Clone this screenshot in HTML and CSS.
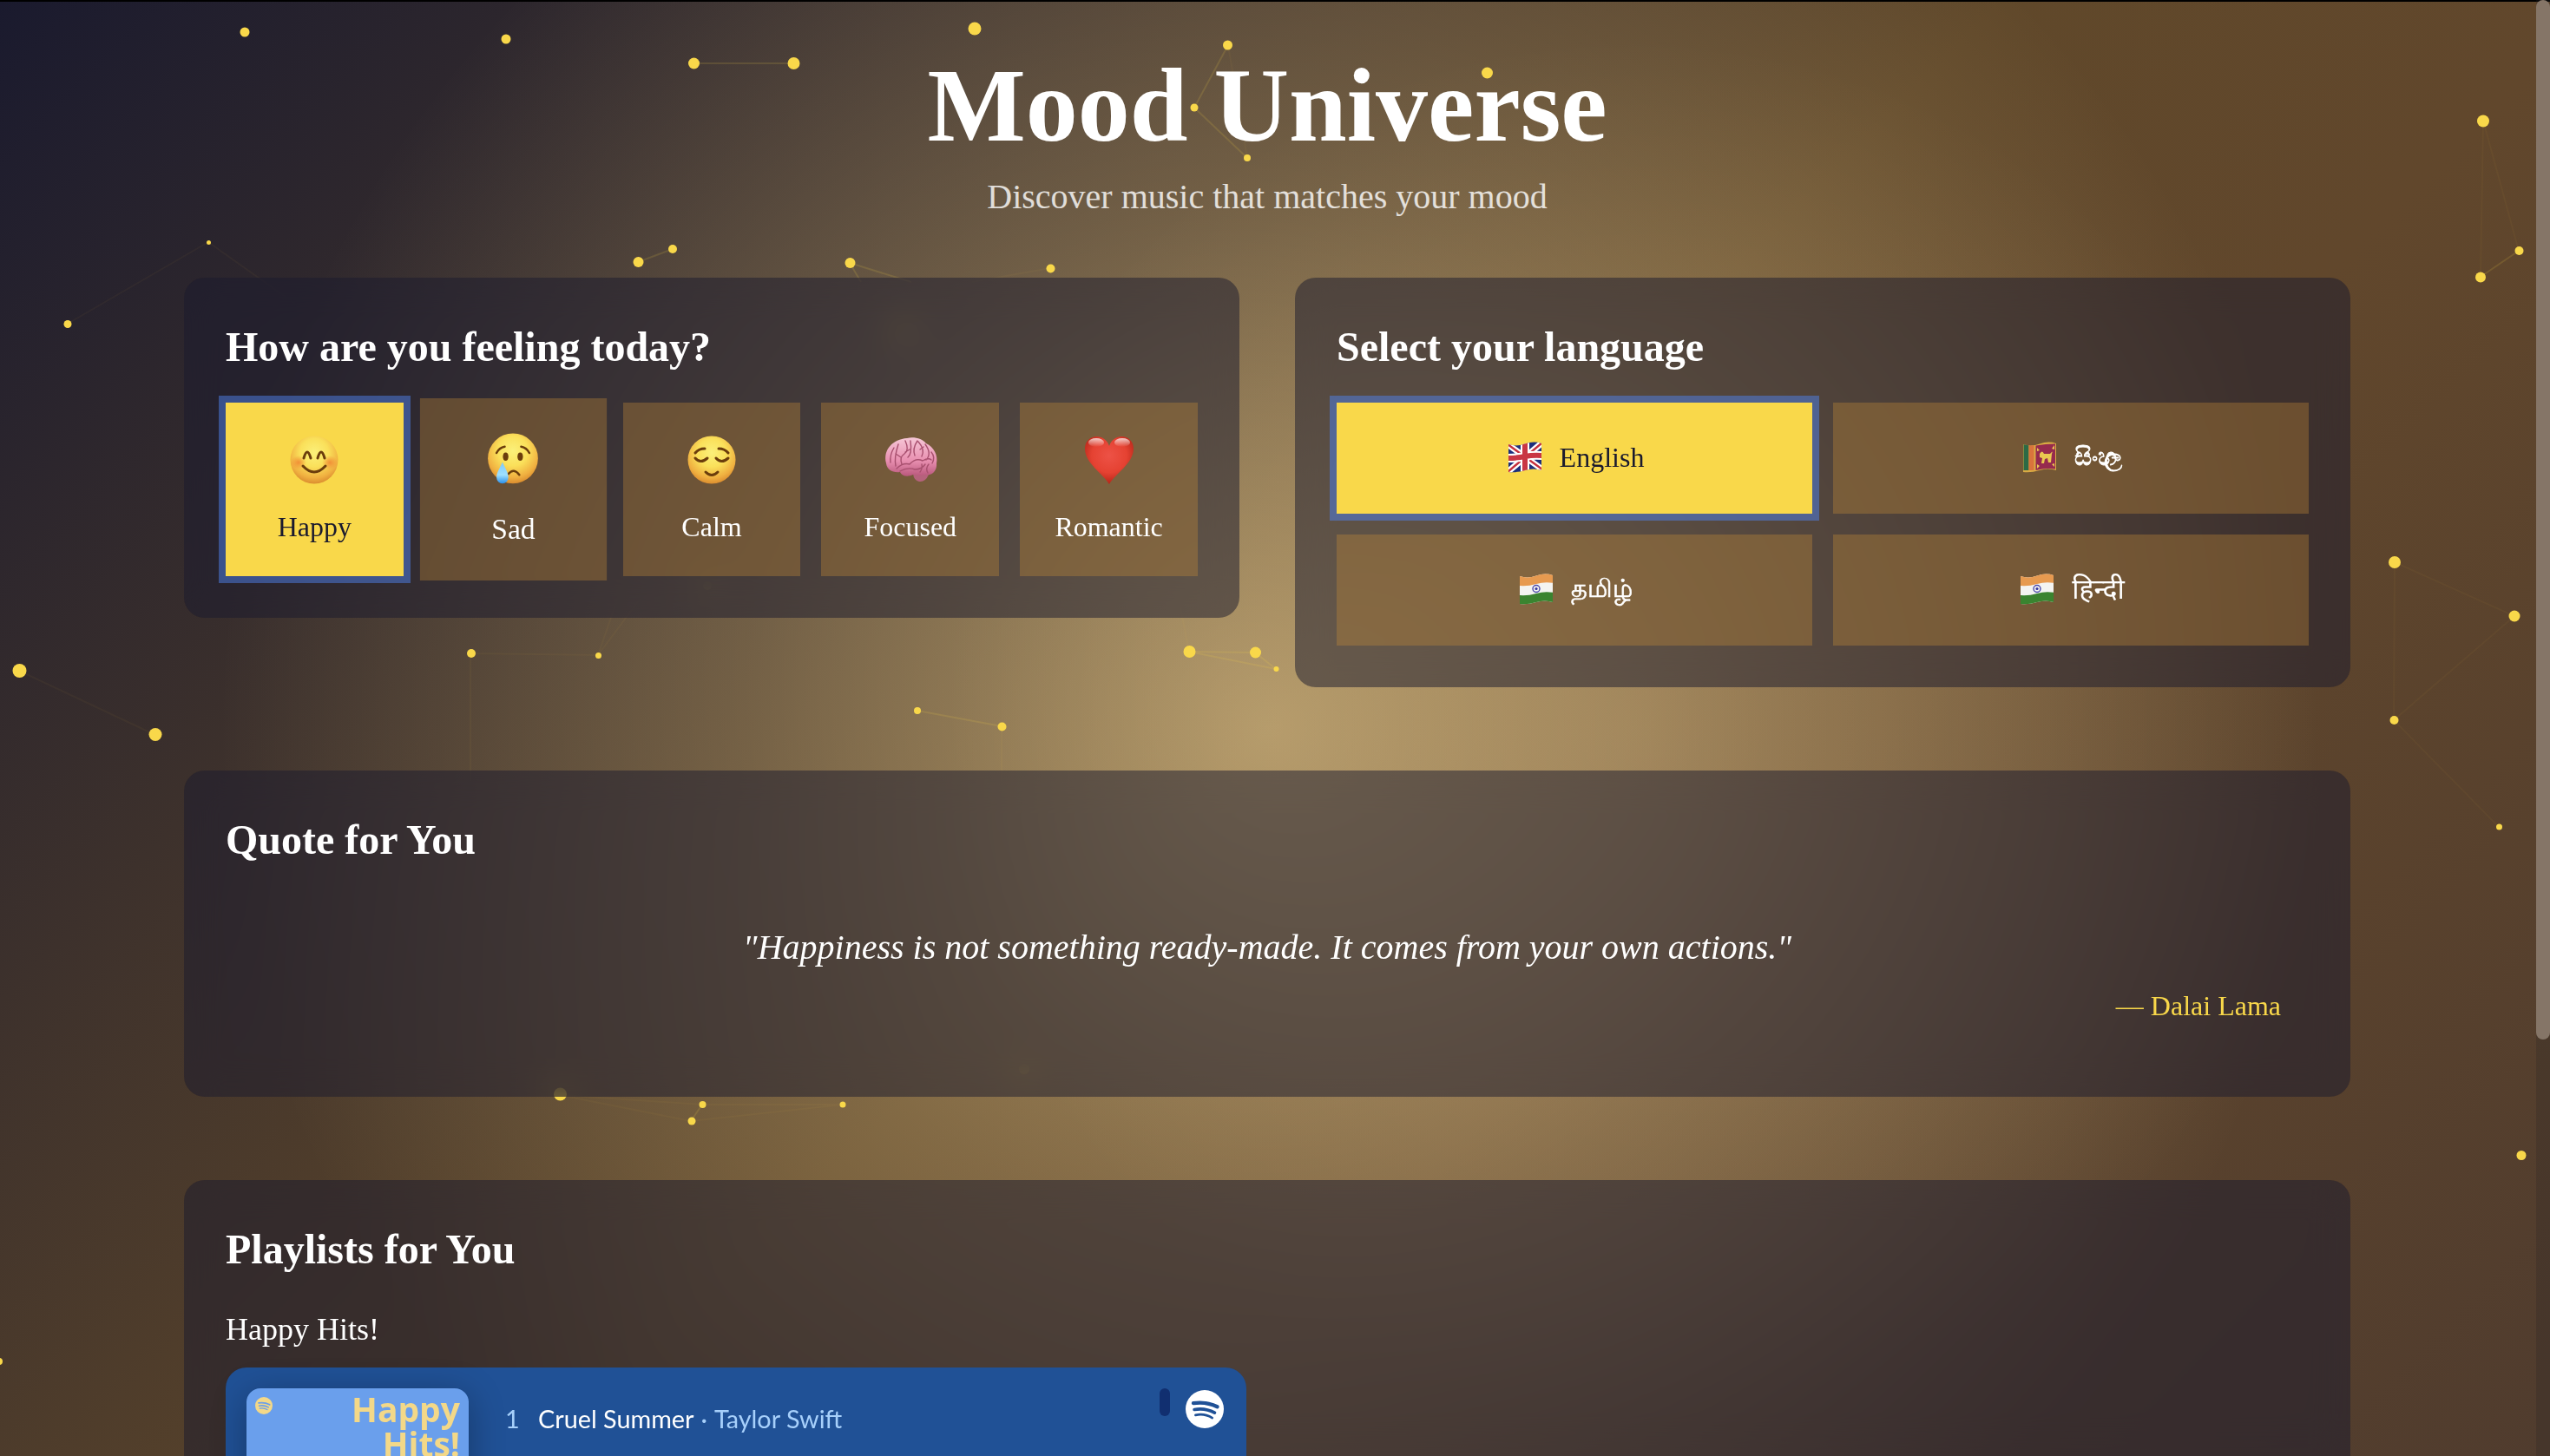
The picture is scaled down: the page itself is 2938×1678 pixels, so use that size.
FILE: index.html
```html
<!DOCTYPE html>
<html lang="en">
<head>
<meta charset="utf-8">
<title>Mood Universe</title>
<link rel="stylesheet" href="styles.css">
</head>
<body>
<svg class="stars" viewBox="0 0 2922 1678" width="2922" height="1678" aria-hidden="true">
  <g class="links">
    <path class="strong" d="M799 73H914M1415 52L1376 124L1437 182M735 302L775 287M2858 319L2902 289M1370 751L1446 752L1470 771L1370 751M809 1273L796 1292M979 303L1050 325M979 303L992 325M1057 819L1154 837"/>
    <path d="M1415 52L1437 182M1210 309L1120 325M240 279L78 373M240 279L340 350M542 753L689 755L745 680M689 755L715 680M542 753V900M22 773L179 847M1154 837V900M2861 139L2902 289M2861 139L2858 319M2759 648L2897 710L2758 830ZM2758 830L2879 953M645 1262L796 1292L971 1273L809 1273L645 1262M1370 751L1360 700"/>
  </g>
  <g class="dots">
    <circle cx="282" cy="37" r="5.5"/><circle cx="583" cy="45" r="5.5"/><circle cx="799.500" cy="73" r="6.500"/><circle cx="914.500" cy="73" r="7"/>
    <circle cx="1123" cy="33" r="7.500"/><circle cx="1414.500" cy="52" r="5.500"/><circle cx="1376" cy="124" r="4.500"/><circle cx="1437" cy="182" r="4"/>
    <circle cx="240.500" cy="279.500" r="2.500"/><circle cx="78" cy="373.500" r="4.500"/><circle cx="735.500" cy="302" r="6"/><circle cx="775" cy="287" r="5"/>
    <circle cx="979.500" cy="303" r="6"/><circle cx="1210.500" cy="309.500" r="5"/><circle cx="543" cy="753" r="5"/><circle cx="689.500" cy="755.500" r="3.500"/>
    <circle cx="22.500" cy="773" r="8"/><circle cx="1370.500" cy="751" r="7"/><circle cx="1446.500" cy="752" r="6.500"/><circle cx="1470.500" cy="771" r="3"/>
    <circle cx="1057" cy="819" r="4"/><circle cx="1154.500" cy="837.500" r="5"/><circle cx="179" cy="846.500" r="7.500"/><circle cx="645.500" cy="1261" r="7.500"/>
    <circle cx="809.500" cy="1273" r="4"/><circle cx="797" cy="1292" r="4.500"/><circle cx="971" cy="1273" r="3.500"/><circle cx="-1" cy="1569" r="4"/>
    <circle cx="1713.500" cy="84" r="6.500"/><circle cx="2861" cy="139.500" r="7"/><circle cx="2902.500" cy="289" r="5"/><circle cx="2858" cy="319.500" r="6"/>
    <circle cx="2759" cy="648" r="7"/><circle cx="2897" cy="710" r="6.500"/><circle cx="2758.500" cy="830" r="5"/><circle cx="2879.500" cy="953" r="3.500"/>
    <circle cx="2905" cy="1331.500" r="5.500"/><circle cx="1040" cy="380" r="7"/><circle cx="815" cy="675" r="5"/><circle cx="1180" cy="1232" r="6"/>
  </g>
</svg>

<main class="page">
  <header class="header">
    <h1 class="title">Mood Universe</h1>
    <p class="subtitle">Discover music that matches your mood</p>
  </header>

  <div class="selectors">
    <section class="card">
      <h2 class="heading">How are you feeling today?</h2>
      <div class="moods">
        <button class="mood active">
          <svg class="emoji" viewBox="0 0 64 64"><circle cx="32" cy="32" r="27.500" fill="url(#face)"/><ellipse cx="14" cy="35" rx="9" ry="8" fill="url(#blush)"/><ellipse cx="50" cy="35" rx="9" ry="8" fill="url(#blush)"/><path d="M20 30q4-14 8 0M36 30q4-14 8 0M19 39q13 14 26 0" class="ink"/></svg>
          <span>Happy</span>
        </button>
        <button class="mood hovered">
          <svg class="emoji" viewBox="0 0 64 64"><circle cx="32" cy="32" r="27.500" fill="url(#face)"/><path d="M14 26q3-6 9-7M50 26q-3-6-9-7M27 49q6-7 12 1" class="ink thin"/><ellipse cx="24" cy="30" rx="3" ry="4.500" fill="#6b3d0c"/><ellipse cx="40" cy="30" rx="3" ry="4.500" fill="#6b3d0c"/><path d="M20.500 36C17 44 14 48 14 53a6.500 6.500 0 0 0 13 0c0-5-3-9-6.500-17z" fill="url(#tear)"/></svg>
          <span>Sad</span>
        </button>
        <button class="mood">
          <svg class="emoji" viewBox="0 0 64 64"><circle cx="32" cy="32" r="27.500" fill="url(#face)"/><path d="M13 24q4-5 11-5M51 24q-4-5-11-5M13 30q6 7 14 0M37 30q6 7 14 0M25 46q7 7 14 0" class="ink"/></svg>
          <span>Calm</span>
        </button>
        <button class="mood">
          <svg class="emoji" viewBox="0 0 64 64"><path d="M35 48q10-5 18 1-4 9-11 8-6-1-7-9z" fill="#b5627c"/><path d="M4 36C0 20 12 8 28 7c9-2 18 1 22 6 9 4 14 14 12 23 1 8-5 15-13 13-6 2-10 0-14 0-6 3-13 2-15-3C12 47 5 44 4 36z" fill="url(#brain)"/><path d="M9 35q-1-9 4-17M15 39q-2-10 3-25M22 37q-3-8 3-12t1-15M29 29q5-4 3-19M37 27q-3-8 3-17M45 28q4-8-4-17M50 32q7-7-1-18M57 36q4-7-1-13M16 42q7-7 15-5 7-8 15-4 7-4 10-1M20 45q9-5 17-2 8 0 12-6M43 46q3-4 2-9M52 47q-3-5 1-10M15 25l6 4M31 20l-5 3M43 20l4-3" fill="none" stroke="#a8506f" stroke-width="1.400" stroke-linecap="round"/></svg>
          <span>Focused</span>
        </button>
        <button class="mood">
          <svg class="emoji" viewBox="0 0 64 64"><path d="M32 60C25 48 4 36 4 19 4 3 26-1 32 16 38-1 60 3 60 19 60 36 39 48 32 60z" fill="url(#heart)"/><ellipse cx="17" cy="12" rx="9" ry="5" fill="url(#shine)"/><ellipse cx="47" cy="12" rx="9" ry="5" fill="url(#shine)"/></svg>
          <span>Romantic</span>
        </button>
      </div>
    </section>

    <section class="card">
      <h2 class="heading">Select your language</h2>
      <div class="languages">
        <button class="language active">
          <svg class="flag" viewBox="0 0 40 40"><g clip-path="url(#wave)"><path fill="#1d2f7c" d="M0 0h40v40H0z"/><path d="M0 5l40 29M40 3L0 37" stroke="#fff" stroke-width="7"/><path d="M0 5l40 29M40 3L0 37" stroke="#c52f3c" stroke-width="2.500"/><path d="M20 0v40M0 21q10 0 20-2t20-1" fill="none" stroke="#fff" stroke-width="10"/><path d="M20 0v40M0 21q10 0 20-2t20-1" fill="none" stroke="#c93644" stroke-width="6"/></g></svg>
          <span>English</span>
        </button>
        <button class="language">
          <svg class="flag" viewBox="0 0 40 40"><g clip-path="url(#wave)"><path fill="#d9ab43" d="M0 0h40v40H0z"/><path fill="#2c6a45" d="M1.500 5h6v30h-6z"/><path fill="#d9743c" d="M7.500 5h6v30h-6z"/><path fill="#962a4e" d="M15.500 6.500Q27 4.500 38 4.500v29Q27 32 15.500 35z"/><path fill="#e9c750" d="M20 16q3-5 5 0h7q4-5 2 0l-1 10h-3l-1-5-3 1-1 5h-3l1-6-3-1zM17 9l3 3-3 1zM37 6v5l-3-1zM17 33v-5l3 2zM37 31l-3-3 3-1z"/></g></svg>
          <span class="sinhala">සිං<span class="tight">හ</span>ල</span>
        </button>
        <button class="language">
          <svg class="flag" viewBox="0 0 40 40"><use href="#india"/></svg>
          <span class="tamil">தமிழ்</span>
        </button>
        <button class="language">
          <svg class="flag" viewBox="0 0 40 40"><use href="#india"/></svg>
          <span class="hindi">हिन्दी</span>
        </button>
      </div>
    </section>
  </div>

  <section class="card quote">
    <h2 class="heading">Quote for You</h2>
    <blockquote class="quote-body">
      <p class="quote-text">"Happiness is not something ready-made. It comes from your own actions."</p>
      <footer class="author">— Dalai Lama</footer>
    </blockquote>
  </section>

  <section class="card playlists">
    <h2 class="heading">Playlists for You</h2>
    <h3 class="playlist-name">Happy Hits!</h3>
    <div class="player">
      <div class="cover">
        <svg class="cover-logo" viewBox="0 0 48 48"><circle cx="24" cy="24" r="24" fill="#f3d888"/><use href="#waves" stroke="#6c9fe9"/></svg>
        <span class="cover-text">Happy<br>Hits!</span>
      </div>
      <p class="track"><span class="number">1</span><span class="song">Cruel Summer</span><span class="artist">·</span><span class="artist">Taylor Swift</span></p>
      <div class="thumb"></div>
      <svg class="logo" viewBox="0 0 48 48"><circle cx="24" cy="24" r="24" fill="#fff"/><use href="#waves" stroke="#205196"/></svg>
    </div>
  </section>
</main>

<div class="scrollbar"><div class="scroll-thumb"></div></div>

<svg class="defs" width="0" height="0" aria-hidden="true">
  <defs>
    <radialGradient id="face" cx=".5" cy=".35" r=".66"><stop offset="0" stop-color="#fbf07a"/><stop offset=".45" stop-color="#fae05a"/><stop offset=".8" stop-color="#f0b040"/><stop offset="1" stop-color="#d98a2e"/></radialGradient>
    <radialGradient id="blush"><stop offset="0" stop-color="#f08030" stop-opacity=".8"/><stop offset="1" stop-color="#f08030" stop-opacity="0"/></radialGradient>
    <linearGradient id="tear" x2="0" y2="1"><stop offset="0" stop-color="#7cc8f8"/><stop offset=".6" stop-color="#9fe0ff"/><stop offset="1" stop-color="#2b90ea"/></linearGradient>
    <linearGradient id="brain" x2="0" y2="1"><stop offset="0" stop-color="#f6c6d6"/><stop offset=".6" stop-color="#e88fb0"/><stop offset="1" stop-color="#b9587c"/></linearGradient>
    <radialGradient id="heart" cx=".5" cy=".4" r=".6"><stop offset="0" stop-color="#ed5246"/><stop offset=".6" stop-color="#e54232"/><stop offset="1" stop-color="#b52518"/></radialGradient>
    <linearGradient id="shine" x2="0" y2="1"><stop offset="0" stop-color="#fff" stop-opacity=".75"/><stop offset="1" stop-color="#fff" stop-opacity="0"/></linearGradient>
    <clipPath id="wave"><path d="M1 5Q10 8 20 4.500T39 4V35Q30 32 20 35T1 37z"/></clipPath>
    <g id="india"><g clip-path="url(#wave)"><path fill="#f4f4f2" d="M0 0h40v40H0z"/><path fill="#e79a50" d="M0 0h40v13Q30 11 20 14T0 16z"/><path fill="#3a8430" d="M0 27Q10 28 20 25T40 24V40H0z"/></g><circle cx="20" cy="19.500" r="4" fill="none" stroke="#4a49ac" stroke-width="1.400"/><circle cx="20" cy="19.500" r="1.600" fill="#3735a0"/></g>
    <g id="waves" fill="none" stroke-linecap="round"><path d="M9.800 16.500q16-2.500 30 4.500" stroke-width="4.600"/><path d="M11 24.500q13.500-2.500 25.500 4" stroke-width="4"/><path d="M12.500 31.500q11-2.500 21 3.500" stroke-width="3"/></g>
  </defs>
</svg>
</body>
</html>
```
FILE: styles.css
```css
* { box-sizing: border-box; margin: 0; padding: 0; }

body {
  width: 2938px;
  height: 1678px;
  overflow: hidden;
  position: relative;
  display: flex;
  color: #fff;
  font-family: "Liberation Serif", "Times New Roman", serif;
  background:
    linear-gradient(#000 0 2px, transparent 2px),
    radial-gradient(circle 800px at 1880px 839px, rgba(255, 220, 160, .17), rgba(255, 220, 160, 0)),
    radial-gradient(circle 1210px at 1461px 839px, rgba(255, 228, 164, .5), rgba(255, 228, 164, .22) 50%, rgba(255, 228, 164, 0)),
    linear-gradient(135deg, #1a1a2e 0%, #60482a 50%, #61472c 65%, #503c2e 100%);
}

.stars { position: absolute; left: 0; top: 0; }
.dots { fill: #f9d84a; }
.links { fill: none; stroke: #f9d84a; stroke-width: 2; stroke-opacity: .04; }
.links .strong { stroke-opacity: .14; }

.page {
  position: relative;
  flex: 1;
  height: 1678px;
  overflow: hidden;
  padding: 62px 214px 0 212px;
}

.header { height: 258px; text-align: center; }
.title { font-size: 120px; line-height: 120px; font-weight: 700; }
.subtitle { margin-top: 17px; font-size: 40px; line-height: 56px; opacity: .8; }

.selectors { display: grid; grid-template-columns: 1fr 1fr; gap: 64px; align-items: start; }

.card {
  padding: 48px;
  border-radius: 24px;
  background: rgba(26, 26, 46, .5);
  backdrop-filter: blur(20px);
}
.heading { font-size: 48px; line-height: 64px; font-weight: 700; margin-bottom: 32px; }

button { border: 0; color: #fff; font: 32px/48px "Liberation Serif", "Times New Roman", "Noto Sans", serif; background: rgba(197, 140, 54, .35); }
.active { background: #f9d84a; color: #1a1a2e; box-shadow: 0 0 0 8px rgba(80, 130, 236, .5); }

.moods { display: grid; grid-template-columns: repeat(5, 1fr); gap: 24px; }
.mood { height: 200px; padding: 32px 0; display: flex; flex-direction: column; align-items: center; gap: 15px; }
.mood .emoji { width: 64px; height: 72px; padding: 2px 0 6px; }
.hovered { transform: scale(1.05); }
.ink { fill: none; stroke: #6b3d0c; stroke-width: 3; stroke-linecap: round; }
.thin { stroke-width: 2.400; }

.languages { display: grid; grid-template-columns: 1fr 1fr; gap: 24px; }
.language { height: 128px; padding-bottom: 2px; display: flex; align-items: center; justify-content: center; gap: 17px; }
.flag { width: 46px; height: 40px; }
.sinhala { font-size: 28px; -webkit-text-stroke: .8px #fff; }
.tight { letter-spacing: -15px; }
.tamil { font-size: 28.500px; -webkit-text-stroke: .6px #fff; }

.quote { margin-top: 96px; height: 376px; }
.quote-body { padding: 32px; }
.quote-text { font-size: 40px; line-height: 56px; font-style: italic; text-align: center; }
.author { margin-top: 15px; font-size: 32px; line-height: 48px; text-align: right; color: #f9d84a; }

.playlists { margin-top: 96px; height: 700px; }
.playlist-name { font-size: 36px; line-height: 56px; font-weight: 400; margin-bottom: 16px; }
.player {
  width: 1176px;
  height: 704px;
  padding: 24px;
  display: flex;
  align-items: flex-start;
  border-radius: 24px;
  background: #205196;
  font-family: "Lato", sans-serif;
}
.cover {
  width: 256px;
  height: 256px;
  padding: 4px 10px;
  display: flex;
  justify-content: space-between;
  align-items: flex-start;
  border-radius: 16px;
  background: #6a9fec;
  box-shadow: 0 8px 40px rgba(0, 0, 0, .3);
}
.cover-logo { width: 20px; height: 20px; margin-top: 6px; }
.cover-text { color: #f3d888; font: 700 39px/40px "Open Sans", sans-serif; text-align: right; }
.track { flex: 1; display: flex; padding: 17px 0 0 42px; font-size: 28.800px; line-height: 36px; white-space: nowrap; }
.number { width: 38px; color: #a7d0fb; }
.artist { color: #a7d0fb; margin-left: 8px; }
.thumb { width: 12px; height: 32px; border-radius: 6px; background: #112f70; margin-right: 18px; }
.logo { width: 44px; height: 44px; margin: 2px 2px 0 0; }

.scrollbar { position: relative; width: 16px; background: rgba(40, 36, 36, .25); }
.scroll-thumb { height: 1198px; border-radius: 8px; background: #857567; }
.defs { position: absolute; }
```
